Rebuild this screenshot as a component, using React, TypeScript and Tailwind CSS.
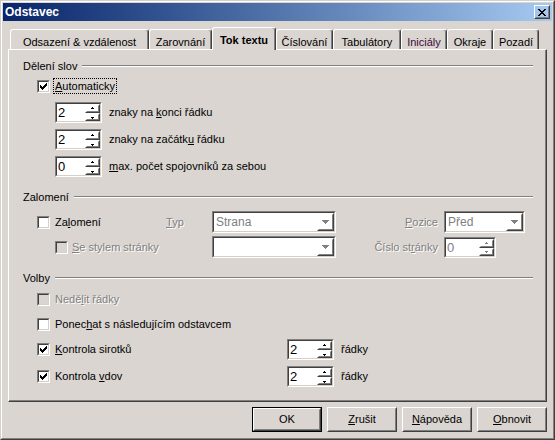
import React from 'react'

// Windows classic dialog: "Odstavec" / Tok textu tab

const DIS = 'text-[#808080] [text-shadow:1px_1px_0_#fff]'

function U({ children }: { children: React.ReactNode }) {
  return <span className="underline decoration-1 underline-offset-[1px]">{children}</span>
}

function Sunken({ className = '', inner = 'bg-white', children }: { className?: string; inner?: string; children?: React.ReactNode }) {
  return (
    <div className={`shrink-0 border border-t-[#808080] border-l-[#808080] border-b-white border-r-white ${className}`}>
      <div className={`h-full w-full border border-t-[#404040] border-l-[#404040] border-b-[#d4d0c8] border-r-[#d4d0c8] ${inner}`}>
        {children}
      </div>
    </div>
  )
}

function Raised({ className = '', children }: { className?: string; children?: React.ReactNode }) {
  return (
    <div className={`border border-t-white border-l-white border-r-[#404040] border-b-[#404040] ${className}`}>
      <div className="h-full w-full border border-transparent border-r-[#808080] border-b-[#808080] flex items-center justify-center">
        {children}
      </div>
    </div>
  )
}

function CheckBox({ checked = false, disabled = false }: { checked?: boolean; disabled?: boolean }) {
  return (
    <Sunken className="w-[13px] h-[13px]" inner={disabled ? 'bg-[#dad5d0]' : 'bg-white'}>
      {checked && (
        <svg width="9" height="9" viewBox="0 0 9 9" shapeRendering="crispEdges" className="block">
          <path
            fill="#000"
            d="M7 1h1v1h-1z M6 2h2v1h-2z M1 3h1v1h-1z M5 3h3v1h-3z M1 4h2v1h-2z M4 4h3v1h-3z M1 5h5v1h-5z M2 6h3v1h-3z M3 7h1v1h-1z"
          />
        </svg>
      )}
    </Sunken>
  )
}

function SmallArrow({ up, disabled }: { up: boolean; disabled?: boolean }) {
  const fill = disabled ? '#808080' : '#000'
  return (
    <svg width="5" height="3" viewBox="0 0 5 3" shapeRendering="crispEdges" className="block">
      {up ? <path fill={fill} d="M2 0h1v1h-1z M1 1h3v1h-3z" /> : <path fill={fill} d="M1 1h3v1h-3z M2 2h1v1h-1z" />}
    </svg>
  )
}

function SpinField({ value, w, disabled = false }: { value: string; w: string; disabled?: boolean }) {
  return (
    <Sunken className={`h-[21px] ${w}`}>
      <div className="flex h-full">
        <div className={`flex-1 pl-[1px] text-[13px] leading-[17px] ${disabled ? 'text-[#808080]' : ''}`}>{value}</div>
        <div className="flex w-[15px] flex-col">
          <Raised className="h-[9px]">
            <SmallArrow up disabled={disabled} />
          </Raised>
          <Raised className="h-[8px]">
            <SmallArrow up={false} disabled={disabled} />
          </Raised>
        </div>
      </div>
    </Sunken>
  )
}

function Combo({ value, w }: { value: string; w: string }) {
  return (
    <Sunken className={`h-[22px] ${w}`}>
      <div className="flex h-full">
        <div className="flex-1 pl-[2px] text-[12px] leading-[18px] text-[#808080]">{value}</div>
        <Raised className="w-[17px] h-full">
          <svg width="8" height="5" viewBox="0 0 8 5" shapeRendering="crispEdges" className="block">
            <path fill="#fff" d="M1 1h7v1h-7z M2 2h5v1h-5z M3 3h3v1h-3z M4 4h1v1h-1z" />
            <path fill="#808080" d="M0 0h7v1h-7z M1 1h5v1h-5z M2 2h3v1h-3z M3 3h1v1h-1z" />
          </svg>
        </Raised>
      </div>
    </Sunken>
  )
}

function Header({ title, className = '' }: { title: string; className?: string }) {
  return (
    <div className={`flex h-[14px] items-center pl-[14px] pr-[13px] ${className}`}>
      <span className="leading-[14px]">{title}</span>
      <div className="ml-[5px] h-[2px] flex-1 border-t border-b border-t-[#808080] border-b-white" />
    </div>
  )
}

const tabs: { label: string; w: string; active?: boolean; color?: string }[] = [
  { label: 'Odsazení & vzdálenost', w: 'w-[139px]' },
  { label: 'Zarovnání', w: 'w-[63px]' },
  { label: 'Tok textu', w: 'w-[64px]', active: true },
  { label: 'Číslování', w: 'w-[57px]' },
  { label: 'Tabulátory', w: 'w-[68px]' },
  { label: 'Iniciály', w: 'w-[46px]', color: 'text-[#3a0c3a]' },
  { label: 'Okraje', w: 'w-[46px]' },
  { label: 'Pozadí', w: 'w-[46px]' },
]

function Button({ label, isDefault = false }: { label: React.ReactNode; isDefault?: boolean }) {
  const body = (
    <Raised className="h-full w-full">
      <span className="leading-none">{label}</span>
    </Raised>
  )
  return isDefault ? (
    <div className="h-[25px] w-[70px] border border-black">{body}</div>
  ) : (
    <div className="h-[25px] w-[70px]">{body}</div>
  )
}

export default function App() {
  return (
    <div className="h-[440px] w-[555px] border border-t-[#d4d0c8] border-l-[#d4d0c8] border-r-[#404040] border-b-[#404040] bg-[#dad5d0] font-['Liberation_Sans',Arial,sans-serif] text-[11px] text-black">
      <div className="flex h-full flex-col border border-t-white border-l-white border-r-[#808080] border-b-[#808080] p-[1px]">
        {/* title bar */}
        <div className="flex h-[18px] shrink-0 items-center bg-linear-to-r from-[#0a246a] to-[#a6caf0] pl-[2px] pr-[2px]">
          <span className="text-[12px] font-bold leading-none text-white">Odstavec</span>
          <Raised className="ml-auto h-[14px] w-[16px]">
            <svg width="8" height="7" viewBox="0 0 8 7" shapeRendering="crispEdges" className="block">
              <path
                fill="#000"
                d="M0 0h2v1h-2z M6 0h2v1h-2z M1 1h2v1h-2z M5 1h2v1h-2z M2 2h4v1h-4z M3 3h2v1h-2z M2 4h4v1h-4z M1 5h2v1h-2z M5 5h2v1h-2z M0 6h2v1h-2z M6 6h2v1h-2z"
              />
            </svg>
          </Raised>
        </div>

        {/* tabs */}
        <div className="mt-[6px] flex h-[22px] shrink-0 items-end pl-[7px]">
          {tabs.map((t) =>
            t.active ? (
              <div
                key={t.label}
                className={`${t.w} relative z-10 -mb-px flex h-[23px] items-start justify-center rounded-t-[3px] border-t border-l border-r border-t-white border-l-white border-r-[#404040] bg-[#dad5d0] pt-[4px] font-bold shadow-[inset_-1px_0_0_#808080]`}
              >
                {t.label}
              </div>
            ) : (
              <div
                key={t.label}
                className={`${t.w} flex h-[20px] items-start justify-center rounded-t-[3px] border-t border-l border-r border-t-white border-l-white border-r-[#404040] pt-[4px] shadow-[inset_-1px_0_0_#808080] ${t.color ?? ''}`}
              >
                {t.label}
              </div>
            )
          )}
        </div>

        {/* tab page */}
        <div className="mx-[5px] h-[353px] shrink-0 border border-t-white border-l-white border-r-[#404040] border-b-[#404040] shadow-[inset_-1px_-1px_0_#808080]">
          <Header title="Dělení slov" className="mt-[9px]" />

          <div className="mt-[5px] flex h-[16px] items-center pl-[28px]">
            <CheckBox checked />
            <span className="ml-[3px] flex h-[16px] items-center border border-dotted border-black px-[1px]">
              <U>A</U>utomaticky
            </span>
          </div>

          <div className="mt-[8px] flex h-[21px] items-center pl-[46px]">
            <SpinField value="2" w="w-[47px]" />
            <span className="ml-[7px]">
              znaky na <U>k</U>onci řádku
            </span>
          </div>
          <div className="mt-[6px] flex h-[21px] items-center pl-[46px]">
            <SpinField value="2" w="w-[47px]" />
            <span className="ml-[7px]">
              znaky na začátk<U>u</U> řádku
            </span>
          </div>
          <div className="mt-[6px] flex h-[21px] items-center pl-[46px]">
            <SpinField value="0" w="w-[47px]" />
            <span className="ml-[7px]">
              <U>m</U>ax. počet spojovníků za sebou
            </span>
          </div>

          <Header title="Zalomení" className="mt-[13px]" />

          <div className="mt-[7px] flex h-[22px] items-center pl-[28px]">
            <div className="flex w-[129px] items-center">
              <CheckBox />
              <span className="ml-[5px]">
                Za<U>l</U>omení
              </span>
            </div>
            <span className={`w-[46px] ${DIS}`}>
              <U>T</U>yp
            </span>
            <Combo value="Strana" w="w-[124px]" />
            <span className={`w-[102px] text-right ${DIS}`}>
              <U>P</U>ozice
            </span>
            <div className="ml-[6px]">
              <Combo value="Před" w="w-[81px]" />
            </div>
          </div>

          <div className="mt-[3px] flex h-[22px] items-center pl-[46px]">
            <div className="flex w-[157px] items-center">
              <CheckBox disabled />
              <span className={`ml-[4px] ${DIS}`}>
                <U>S</U>e stylem stránky
              </span>
            </div>
            <Combo value="" w="w-[124px]" />
            <span className={`w-[102px] text-right ${DIS}`}>
              Číslo st<U>r</U>ánky
            </span>
            <div className="ml-[6px]">
              <SpinField value="0" w="w-[52px]" disabled />
            </div>
          </div>

          <Header title="Volby" className="mt-[13px]" />

          <div className="mt-[6px] flex h-[16px] items-center pl-[28px]">
            <CheckBox disabled />
            <span className={`ml-[5px] ${DIS}`}>
              Nedě<U>l</U>it řádky
            </span>
          </div>
          <div className="mt-[9px] flex h-[16px] items-center pl-[28px]">
            <CheckBox />
            <span className="ml-[5px]">
              Ponec<U>h</U>at s následujícím odstavcem
            </span>
          </div>
          <div className="mt-[7px] flex h-[21px] items-center pl-[28px]">
            <div className="flex w-[250px] items-center">
              <CheckBox checked />
              <span className="ml-[5px]">
                <U>K</U>ontrola sirotků
              </span>
            </div>
            <SpinField value="2" w="w-[47px]" />
            <span className="ml-[7px]">řádky</span>
          </div>
          <div className="mt-[6px] flex h-[21px] items-center pl-[28px]">
            <div className="flex w-[250px] items-center">
              <CheckBox checked />
              <span className="ml-[5px]">
                Kontrola <U>v</U>dov
              </span>
            </div>
            <SpinField value="2" w="w-[47px]" />
            <span className="ml-[7px]">řádky</span>
          </div>
        </div>

        {/* buttons */}
        <div className="mr-[5px] mt-[5px] flex shrink-0 justify-end gap-[5px]">
          <Button label="OK" isDefault />
          <Button label={<><U>Z</U>rušit</>} />
          <Button label={<><U>N</U>ápověda</>} />
          <Button label={<><U>O</U>bnovit</>} />
        </div>
      </div>
    </div>
  )
}
